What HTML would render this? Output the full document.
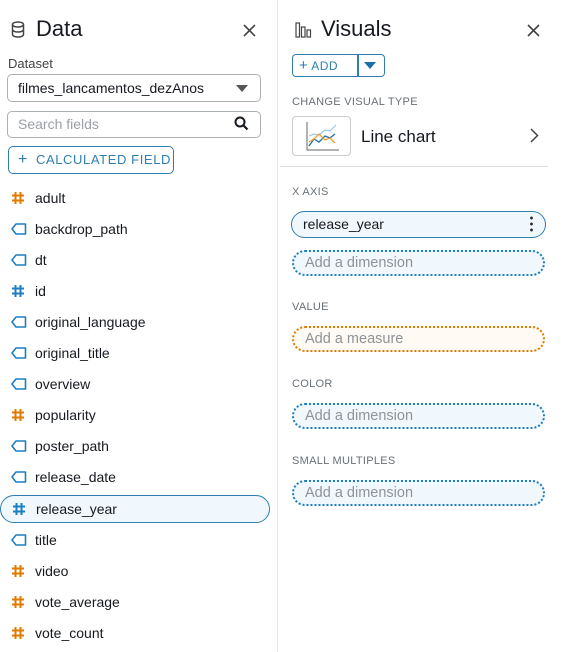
<!DOCTYPE html>
<html><head><meta charset="utf-8"><style>
*{box-sizing:border-box;margin:0;padding:0}
body{width:565px;height:652px;background:#fff;font-family:"Liberation Sans",sans-serif;color:#16191f;position:relative;overflow:hidden}
.a{position:absolute}
.divider{left:277px;top:0;width:1px;height:652px;background:#e4e4e4}
.h1{font-size:22px;color:#16191f}
.lbl{font-size:11px;color:#687078;letter-spacing:.3px}
.field{position:absolute;left:0;width:270px;height:28px;font-size:14px;line-height:28px;padding-left:35px}
.field svg{position:absolute;left:11px;top:7px}
.sel{border:1px solid #2e7fb0;border-radius:14px;background:#f1f8fd}
.drop{position:absolute;left:292px;width:253px;height:26px;border-radius:13px;border:2px dotted #1d7ec2;background:#f1f8fd;font-size:14.5px;color:#8d9399;line-height:22px;padding-left:11px}
</style></head><body>
<div class="a divider"></div>
<svg class="a" style="left:11px;top:21px" width="14" height="17" viewBox="0 0 14 17"><ellipse cx="7" cy="3.5" rx="5.5" ry="2.5" fill="none" stroke="#444" stroke-width="1.5"/><path d="M1.5 3.5v10c0 1.4 2.5 2.5 5.5 2.5s5.5-1.1 5.5-2.5v-10M1.5 8.5c0 1.4 2.5 2.5 5.5 2.5s5.5-1.1 5.5-2.5" fill="none" stroke="#444" stroke-width="1.5"/></svg>
<div class="a h1" style="left:36px;top:16px">Data</div>
<svg class="a" style="left:243px;top:24px" width="13" height="13"><path d="M1 1l11 11M12 1L1 12" stroke="#444" stroke-width="1.6"/></svg>
<div class="a" style="left:8px;top:56px;font-size:13px;color:#444">Dataset</div>
<div class="a" style="left:7px;top:74px;width:254px;height:28px;border:1px solid #aab0b6;border-radius:5px;font-size:14px;line-height:26px;padding-left:10px">filmes_lancamentos_dezAnos</div>
<svg class="a" style="left:236px;top:85px" width="12" height="7"><path d="M0 0h12L6 7z" fill="#555"/></svg>
<div class="a" style="left:7px;top:111px;width:254px;height:27px;border:1px solid #aab0b6;border-radius:5px;font-size:14px;line-height:25px;padding-left:10px;color:#9aa0a6">Search fields</div>
<svg class="a" style="left:234px;top:116px" width="15" height="15"><circle cx="6" cy="6" r="4.5" fill="none" stroke="#16191f" stroke-width="2"/><path d="M9.5 9.5l4 4" stroke="#16191f" stroke-width="2.2"/></svg>
<div class="a" style="left:8px;top:146px;width:166px;height:28px;border:1.5px solid #2e7fb0;border-radius:5px;font-size:13px;color:#2e7fb0;line-height:25px;padding-left:9px;letter-spacing:.6px"><span style="font-size:16px;margin-right:8px">+</span>CALCULATED FIELD</div>
<div class="field" style="top:184px"><svg width="14" height="14" viewBox="0 0 14 14"><path d="M4.5 1v12M9.5 1v12M1 4.5h12M1 9.5h12" stroke="#e07b00" stroke-width="2"/></svg>adult</div>
<div class="field" style="top:215px"><svg width="16" height="14" viewBox="0 0 16 14"><path d="M5 2h9.5v10H5L1 7z" fill="none" stroke="#1d7ec2" stroke-width="1.6" stroke-linejoin="round"/></svg>backdrop_path</div>
<div class="field" style="top:246px"><svg width="16" height="14" viewBox="0 0 16 14"><path d="M5 2h9.5v10H5L1 7z" fill="none" stroke="#1d7ec2" stroke-width="1.6" stroke-linejoin="round"/></svg>dt</div>
<div class="field" style="top:277px"><svg width="14" height="14" viewBox="0 0 14 14"><path d="M4.5 1v12M9.5 1v12M1 4.5h12M1 9.5h12" stroke="#1d7ec2" stroke-width="2"/></svg>id</div>
<div class="field" style="top:308px"><svg width="16" height="14" viewBox="0 0 16 14"><path d="M5 2h9.5v10H5L1 7z" fill="none" stroke="#1d7ec2" stroke-width="1.6" stroke-linejoin="round"/></svg>original_language</div>
<div class="field" style="top:339px"><svg width="16" height="14" viewBox="0 0 16 14"><path d="M5 2h9.5v10H5L1 7z" fill="none" stroke="#1d7ec2" stroke-width="1.6" stroke-linejoin="round"/></svg>original_title</div>
<div class="field" style="top:370px"><svg width="16" height="14" viewBox="0 0 16 14"><path d="M5 2h9.5v10H5L1 7z" fill="none" stroke="#1d7ec2" stroke-width="1.6" stroke-linejoin="round"/></svg>overview</div>
<div class="field" style="top:401px"><svg width="14" height="14" viewBox="0 0 14 14"><path d="M4.5 1v12M9.5 1v12M1 4.5h12M1 9.5h12" stroke="#e07b00" stroke-width="2"/></svg>popularity</div>
<div class="field" style="top:432px"><svg width="16" height="14" viewBox="0 0 16 14"><path d="M5 2h9.5v10H5L1 7z" fill="none" stroke="#1d7ec2" stroke-width="1.6" stroke-linejoin="round"/></svg>poster_path</div>
<div class="field" style="top:463px"><svg width="16" height="14" viewBox="0 0 16 14"><path d="M5 2h9.5v10H5L1 7z" fill="none" stroke="#1d7ec2" stroke-width="1.6" stroke-linejoin="round"/></svg>release_date</div>
<div class="field sel" style="top:495px"><svg width="14" height="14" viewBox="0 0 14 14" style="top:6px"><path d="M4.5 1v12M9.5 1v12M1 4.5h12M1 9.5h12" stroke="#1d7ec2" stroke-width="2"/></svg><span style="position:relative;top:-1px">release_year</span></div>
<div class="field" style="top:526px"><svg width="16" height="14" viewBox="0 0 16 14"><path d="M5 2h9.5v10H5L1 7z" fill="none" stroke="#1d7ec2" stroke-width="1.6" stroke-linejoin="round"/></svg>title</div>
<div class="field" style="top:557px"><svg width="14" height="14" viewBox="0 0 14 14"><path d="M4.5 1v12M9.5 1v12M1 4.5h12M1 9.5h12" stroke="#e07b00" stroke-width="2"/></svg>video</div>
<div class="field" style="top:588px"><svg width="14" height="14" viewBox="0 0 14 14"><path d="M4.5 1v12M9.5 1v12M1 4.5h12M1 9.5h12" stroke="#e07b00" stroke-width="2"/></svg>vote_average</div>
<div class="field" style="top:619px"><svg width="14" height="14" viewBox="0 0 14 14"><path d="M4.5 1v12M9.5 1v12M1 4.5h12M1 9.5h12" stroke="#e07b00" stroke-width="2"/></svg>vote_count</div>

<svg class="a" style="left:295px;top:22px" width="17" height="16" viewBox="0 0 17 16"><rect x="1" y="1" width="3.5" height="14" fill="none" stroke="#444" stroke-width="1.2"/><rect x="6.5" y="5" width="3.5" height="10" fill="none" stroke="#444" stroke-width="1.2"/><rect x="12" y="8" width="3.5" height="7" fill="none" stroke="#444" stroke-width="1.2"/></svg>
<div class="a h1" style="left:321px;top:16px">Visuals</div>
<svg class="a" style="left:527px;top:24px" width="13" height="13"><path d="M1 1l11 11M12 1L1 12" stroke="#444" stroke-width="1.6"/></svg>
<div class="a" style="left:292px;top:54px;width:93px;height:23px;border:1.5px solid #2e7fb0;border-radius:4px"></div>
<div class="a" style="left:357px;top:54px;width:1.5px;height:23px;background:#2e7fb0"></div>
<div class="a" style="left:299px;top:57px;font-size:12px;color:#2e7fb0;letter-spacing:.5px"><span style="font-size:15px;margin-right:3px">+</span>ADD</div>
<svg class="a" style="left:364px;top:62px" width="12" height="7"><path d="M0 0h12L6 7z" fill="#1d6ea8"/></svg>
<div class="a lbl" style="left:292px;top:96px">CHANGE VISUAL TYPE</div>
<div class="a" style="left:292px;top:116px;width:59px;height:40px;border:1px solid #ccc;border-radius:4px"></div>
<svg class="a" style="left:303px;top:120px" width="40" height="34" viewBox="0 0 40 34"><path d="M4 2v28h32" fill="none" stroke="#666" stroke-width="1"/><path d="M6 16l5-2 5 1 6-5 5 1 6-6" fill="none" stroke="#9ac9e8" stroke-width="1.2"/><path d="M6 26l5-7 5 3 6-6 5 2 5-4" fill="none" stroke="#1f6fa8" stroke-width="1.3"/><path d="M6 22l5-3 5-5 6 6 5-2 5 5" fill="none" stroke="#f0a030" stroke-width="1.3"/></svg>
<div class="a" style="left:361px;top:127px;font-size:17px">Line chart</div>
<svg class="a" style="left:530px;top:128px" width="9" height="15"><path d="M1 1l6.5 6.5L1 14" fill="none" stroke="#444" stroke-width="1.5"/></svg>
<div class="a" style="left:280px;top:166px;width:268px;height:1px;background:#ddd"></div>
<div class="a lbl" style="left:292px;top:186px">X AXIS</div>
<div class="a" style="left:291px;top:211px;width:255px;height:27px;border:1.5px solid #2e7fb0;border-radius:14px;background:#f1f8fd;font-size:14px;line-height:24px;padding-left:11px">release_year</div>
<div class="a" style="left:530px;top:215px;width:3px;height:18px;background:radial-gradient(circle,#333 1.3px,transparent 1.6px) 0 0/3px 6px"></div>
<div class="drop" style="top:250px">Add a dimension</div>
<div class="a lbl" style="left:292px;top:301px">VALUE</div>
<div class="drop" style="top:326px;border-color:#e07b00;background:#fffaf3">Add a measure</div>
<div class="a lbl" style="left:292px;top:378px">COLOR</div>
<div class="drop" style="top:403px">Add a dimension</div>
<div class="a lbl" style="left:292px;top:455px">SMALL MULTIPLES</div>
<div class="drop" style="top:480px">Add a dimension</div>
</body></html>
